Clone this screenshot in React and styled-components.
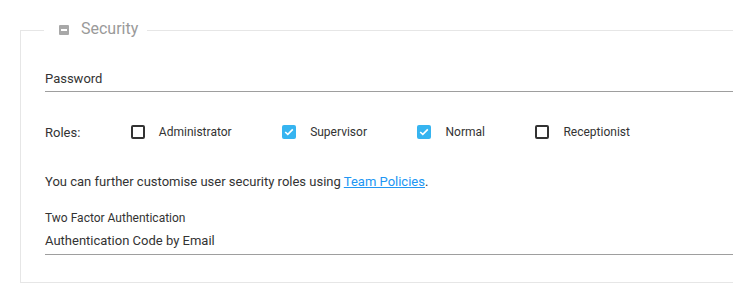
import React from 'react';
import styled, { createGlobalStyle } from 'styled-components';

const GlobalStyle = createGlobalStyle`
  html, body {
    margin: 0;
    padding: 0;
    overflow: hidden;
    background: #ffffff;
  }
  body {
    font-family: Roboto, "Liberation Sans", sans-serif;
    color: #333333;
  }
`;

const roles = [
  { name: 'Administrator', checked: false },
  { name: 'Supervisor', checked: true },
  { name: 'Normal', checked: true },
  { name: 'Receptionist', checked: false },
];

const App = () => {
  return (
    <>
      <GlobalStyle />
      <Page>
        <Section>
          <Legend>
            <CollapseIcon />
            Security
          </Legend>

          <Field $top={30} $pad={4}>
            <FieldText>Password</FieldText>
          </Field>

          <RolesRow>
            <RolesLabel>Roles:</RolesLabel>
            {roles.map((role) => (
              <Role key={role.name}>
                <Box $checked={role.checked}>
                  {role.checked && (
                    <svg width="10" height="8" viewBox="0 0 10 8">
                      <path
                        d="M1.2 4 L3.8 6.4 L8.8 1.4"
                        fill="none"
                        stroke="#ffffff"
                        strokeWidth="1.6"
                      />
                    </svg>
                  )}
                </Box>
                <RoleName>{role.name}</RoleName>
              </Role>
            ))}
          </RolesRow>

          <Info>
            You can further customise user security roles using{' '}
            <Link href="#">Team Policies</Link>.
          </Info>

          <SmallLabel>Two Factor Authentication</SmallLabel>
          <Field $top={8} $pad={5}>
            <FieldText>Authentication Code by Email</FieldText>
          </Field>
        </Section>
      </Page>
    </>
  );
};

const Page = styled.div`
  padding: 19px 0 0 20px;
  width: 800px;
`;

const Section = styled.fieldset`
  margin: 0;
  padding: 0 0 27px 24px;
  width: 760px;
  border: 1px solid #e6e6e6;
  display: flex;
  flex-direction: column;
`;

const Legend = styled.legend`
  padding: 0 9px 2px 15px;
  margin-left: -1px;
  font-size: 16px;
  line-height: 20px;
  color: #9a9a9a;
  display: flex;
  align-items: center;
`;

const CollapseIcon = styled.span`
  flex-shrink: 0;
  width: 10px;
  height: 10px;
  border-radius: 1px;
  background: #a8a8a8;
  margin-right: 12px;
  margin-top: 1px;
  display: inline-flex;
  align-items: center;
  justify-content: center;

  &::after {
    content: '';
    width: 6px;
    height: 2px;
    background: #ffffff;
  }
`;

const Field = styled.div`
  margin-top: ${(p) => p.$top}px;
  padding-bottom: ${(p) => p.$pad}px;
  border-bottom: 1px solid #9e9e9e;
`;

const FieldText = styled.div`
  font-size: 13px;
  line-height: 16px;
  color: #333333;
`;

const RolesRow = styled.div`
  margin-top: 33px;
  height: 14px;
  display: flex;
  align-items: center;
  gap: 50.5px;
`;

const RolesLabel = styled.span`
  font-size: 13px;
  color: #333333;
`;

const Role = styled.label`
  display: flex;
  align-items: center;
  gap: 14px;
`;

const Box = styled.span`
  box-sizing: border-box;
  width: 14px;
  height: 14px;
  border-radius: 2px;
  border: ${(p) => (p.$checked ? 'none' : '2px solid #333333')};
  background: ${(p) => (p.$checked ? '#36b4f0' : '#ffffff')};
  display: flex;
  align-items: center;
  justify-content: center;
`;

const RoleName = styled.span`
  font-size: 12px;
  color: #333333;
`;

const Info = styled.p`
  margin: 35px 0 0;
  font-size: 13px;
  line-height: 16px;
  color: #333333;
`;

const Link = styled.a`
  color: #2196f3;
  text-decoration: underline;
`;

const SmallLabel = styled.div`
  margin-top: 21px;
  font-size: 12px;
  line-height: 14px;
  color: #333333;
`;

export default App;
